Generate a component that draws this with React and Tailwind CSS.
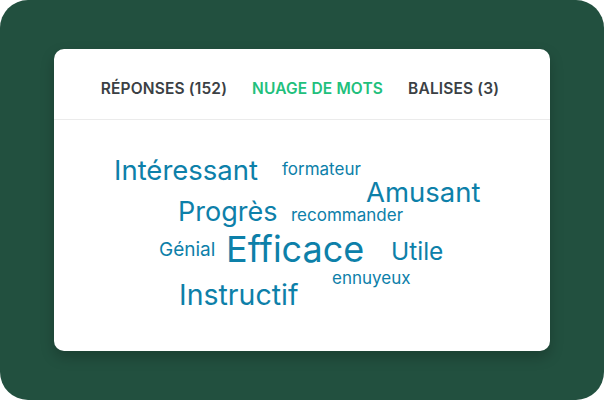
import React from 'react';

const words = [
  { text: 'Intéressant', cls: 'left-[60px] top-[37px] text-[27.5px]' },
  { text: 'formateur', cls: 'left-[228px] top-[41px] text-[17px]' },
  { text: 'Amusant', cls: 'left-[312px] top-[59px] text-[27.5px]' },
  { text: 'Progrès', cls: 'left-[124px] top-[78px] text-[27px]' },
  { text: 'recommander', cls: 'left-[237px] top-[87px] text-[17px]' },
  { text: 'Génial', cls: 'left-[105px] top-[120px] text-[19px]' },
  { text: 'Efficace', cls: 'left-[172px] top-[111px] text-[36px]' },
  { text: 'Utile', cls: 'left-[337px] top-[119px] text-[24.5px]' },
  { text: 'ennuyeux', cls: 'left-[278px] top-[150px] text-[17px]' },
  { text: 'Instructif', cls: 'left-[125px] top-[161px] text-[28.5px]' },
];

function App() {
  return (
    <div
      className="w-[604px] h-[400px] bg-[#22503f] rounded-[28px] px-[54px] pt-[49px]"
      style={{ fontFamily: 'Inter, "Noto Sans", sans-serif' }}
    >
      <div className="w-[496px] h-[302px] bg-white rounded-[10px] shadow-[0_6px_14px_rgba(0,0,0,0.22)] flex flex-col overflow-hidden">
        <div className="h-[71px] border-b border-[#ebebeb] flex justify-center gap-[25px] pt-[32px] pr-[4px] text-[15.5px] tracking-[0.01em] font-semibold leading-none">
          <span className="text-[#3b4044]">RÉPONSES (152)</span>
          <span className="text-[#21c07c]">NUAGE DE MOTS</span>
          <span className="text-[#3b4044]">BALISES (3)</span>
        </div>
        <div className="relative flex-1 text-[#0d80a9]">
          {words.map((w) => (
            <span key={w.text} className={`absolute leading-none whitespace-nowrap ${w.cls}`}>
              {w.text}
            </span>
          ))}
        </div>
      </div>
    </div>
  );
}

export default App;
